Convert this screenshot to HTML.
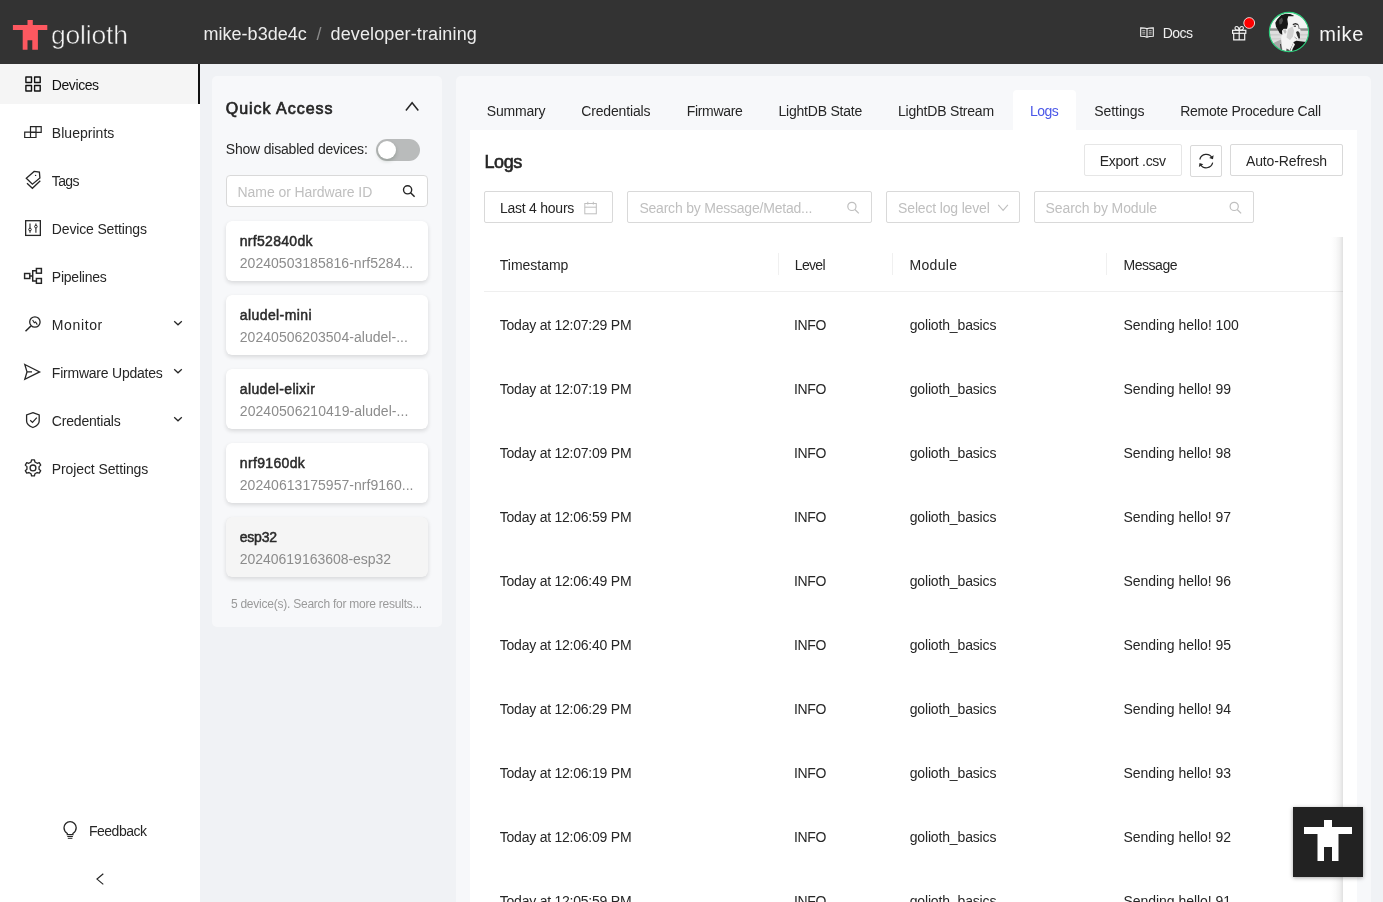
<!DOCTYPE html>
<html lang="en"><head><meta charset="utf-8"><title>Golioth Console - Logs</title>
<style>
*{box-sizing:border-box;margin:0;padding:0}
html,body{width:1383px;height:902px;overflow:hidden}
body{background:#f0f2f5;font-family:"Liberation Sans",Arial,sans-serif;color:#262626;position:relative;font-size:13.5px}
.t{position:absolute;white-space:nowrap;display:block;will-change:transform}
.abs{position:absolute}
header{position:absolute;left:0;top:0;width:1383px;height:64px;background:#333}
aside{position:absolute;left:0;top:64px;width:200px;height:838px;background:#fff}
.active{position:absolute;left:0;top:0;width:200px;height:40px;background:#f5f5f5;border-right:2px solid #111}
#quick{position:absolute;left:212px;top:76px;width:230px;height:551px;background:#f7f8fa;border-radius:5px}
#main{position:absolute;left:456px;top:76px;width:915px;height:840px;background:#f7f8fa;border-radius:5px}
#content{position:absolute;left:14px;top:54px;width:887.200px;height:800px;background:#fff}
.tabact{position:absolute;left:556.700px;top:14px;width:63.300px;height:40px;background:#fff;border-radius:4px 4px 0 0}
.btn{position:absolute;background:#fff;border:1px solid #d9d9d9;border-radius:2px}
.card{position:absolute;left:14px;width:202px;height:60px;background:#fff;border-radius:6px;box-shadow:0 2px 4px rgba(0,0,0,.13),0 0 1px rgba(0,0,0,.06)}
.card.sel{background:#f5f5f5}
svg{position:absolute;left:0;top:0;overflow:visible}
.ic{fill:none;stroke:#262626;stroke-width:1.3;stroke-linejoin:miter;stroke-linecap:butt}
</style></head><body>

<header>
<svg width="1383" height="64" viewBox="0 0 1383 64">
<path fill="#fd5860" d="M27.5 20h5.3v5H47.3v5H37.9V49.7h-5.6V40.2h-4.800v9.5h-4.800V30H12.9v-5h14.6z"/>
<g fill="none" stroke="#f2f2f2" stroke-width="1.1"><path d="M1146.7 28.6c-1.2-.5-3.200-.7-6-.7v8.300c2.800 0 5 .2 6.300 1.200c1.300-1 3.500-1.200 6.300-1.200v-8.300c-2.800 0-4.800.2-6 .7zM1147 28.800v8.600"/><path d="M1142.300 30.600h2.900M1142.300 32.300h2.900M1142.300 34h2.900M1148.800 30.600h2.900M1148.800 32.300h2.900M1148.800 34h2.900" stroke-width=".8" stroke="#cfcfcf"/></g>
<g fill="none" stroke="#f2f2f2" stroke-width="1.2"><rect x="1232.6" y="30.3" width="13.2" height="3"/><path d="M1233.7 33.3v6.600h11v-6.600M1239.2 30.3v9.600"/><path d="M1239.2 30.100c-.3-2-1.300-3.600-2.600-3.600c-1 0-1.600.7-1.600 1.600c0 1.100.9 1.900 2 1.900zM1239.2 30.100c.3-2 1.300-3.600 2.600-3.600c1 0 1.600.7 1.600 1.600c0 1.100-.9 1.900-2 1.900z" stroke-width="1.1"/></g>
<circle cx="1249.200" cy="23" r="5.400" fill="#ff0000" stroke="#fff" stroke-width=".8"/>
<defs><clipPath id="av"><circle cx="1289" cy="32" r="19.600"/></clipPath><filter id="avb" x="-10%" y="-10%" width="120%" height="120%"><feGaussianBlur stdDeviation=".450"/></filter></defs>
<g clip-path="url(#av)"><g filter="url(#avb)">
<rect x="1267" y="10" width="44" height="44" fill="#f4f4f4"/>
<rect x="1267" y="31" width="44" height="11" fill="#dedede"/>
<rect x="1267" y="28.300" width="44" height="2.500" fill="#8d8d8d"/>
<rect x="1267" y="34.500" width="44" height=".8" fill="#bdbdbd"/>
<rect x="1267" y="38.500" width="44" height=".8" fill="#c4c4c4"/>
<rect x="1267" y="42" width="44" height="12" fill="#ececec"/>
<path d="M1272 43.500l9.700-4.200 2.300 5.400 1 9.300h-13z" fill="#a9a9a9"/>
<path d="M1280.500 44l1.300 10" stroke="#3a3a3a" stroke-width="1" fill="none"/>
<path d="M1288.300 16.300h5l3 3 2 4.700.700 3.300 1.700 3-1 1.700.3 6-1.700 1.300-3.300 1.700-1.300 3.700-1 9.300h-9.700l-1.300-9.300-.6-5.400.6-4.600-.3-4 1.700-2h3.300l1-4.700z" fill="#f3f3f3"/>
<path d="M1288 29l4.500-2.500 1.500 4-1 6-3 3.500-3.500-2.500z" fill="#d2d2d2"/>
<path d="M1283 30.500l2.500-1.500 1 3-1.500 2z" fill="#bcbcbc"/>
<path d="M1293.700 42l2.600-1.300 9.700 1.300 2 1v11h-20l4.300-8.700z" fill="#161616"/>
<path d="M1289 54l2.500-7 2-4.500 1.500 2-2.500 4.500-1 5z" fill="#f0f0f0"/>
<path d="M1286.500 48.500l3 1.500-1 4h-2.500z" fill="#555"/>
<path d="M1285.700 13.700l4.600.2 3.700 1.800-.7.600h-5l-1 3 .7 4.700-1 4.700h-3.300l-1.700 2 .3 4-2.600-1.400-1.700-3.300-2-3.300-.7-4 2-3.400 3.700-4z" fill="#151515"/>
<path d="M1279 20l3-2.500 1 3-1.500 3.500-2 .5z" fill="#4a4a4a"/>
<path d="M1292.800 24.600l2.700-.9 2.500.9" stroke="#2a2a2a" stroke-width="1.300" fill="none"/>
<path d="M1293.800 26.200h2.200" stroke="#333" stroke-width="1.200" fill="none"/><path d="M1298.300 24.500l.9 4.500" stroke="#777" stroke-width="1" fill="none"/>
<path d="M1296 32l2-1 1.700 2 .3 5.300-1.300.4-1.700-3.400z" fill="#2e2e2e"/>
<path d="M1294.500 37l2.500 2" stroke="#888" stroke-width=".8" fill="none"/>
</g></g>
<circle cx="1289" cy="32" r="19.600" fill="none" stroke="#2fd07f" stroke-width="1.100"/>
</svg>
<span class="t" style="left:50px;top:19px;padding-left:0.90px;font-size:26.5px;line-height:32px;letter-spacing:-0.167px;color:#f4f4f4;-webkit-text-stroke:.55px #333;">golioth</span>
<span class="t" style="left:203px;top:23px;padding-left:0.50px;font-size:18px;line-height:22px;letter-spacing:0.025px;color:#ededed;">mike-b3de4c</span>
<span class="t" style="left:316px;top:23px;padding-left:0.50px;font-size:18px;line-height:22px;letter-spacing:0.000px;color:#8a8a8a;">/</span>
<span class="t" style="left:330px;top:23px;padding-left:0.50px;font-size:18px;line-height:22px;letter-spacing:0.129px;color:#ededed;">developer-training</span>
<span class="t" style="left:1162px;top:24px;padding-left:0.80px;font-size:14px;line-height:18px;letter-spacing:-0.567px;color:#f0f0f0;">Docs</span>
<span class="t" style="left:1319px;top:22px;padding-left:0.20px;font-size:20px;line-height:24px;letter-spacing:0.650px;color:#f5f5f5;">mike</span>
</header>
<aside>
<div class="active"></div>
<svg width="200" height="838" viewBox="0 64 200 838"><g class="ic">
<g stroke-width="1.4" stroke="#111" stroke-linejoin="round"><rect x="25.9" y="77" width="5.6" height="5.5"/><rect x="34.6" y="77" width="5.6" height="5.5"/><rect x="25.9" y="85.5" width="5.6" height="5.5"/><rect x="34.6" y="85.5" width="5.6" height="5.5"/></g>
<path stroke-width="1.200" d="M30.500 126.700h10.700v5.600H30.500zM36 126.700v10.800M24.700 132.100h11.300v5.400H24.700zM30.500 132.100v5.400"/>
<path d="M34.100 171.400l5.300.7.500 5.800-7.500 6.300-6.100-5.900z"/><path d="M27 183.300l5.400 5 7.900-7.500"/><circle cx="35.600" cy="175.400" r=".7" fill="#262626" stroke="none"/>
<rect x="25.650" y="220.700" width="14.700" height="14.700"/><path d="M30 223.500v4.700M30 230.800v2M35.900 223.500v1.800M35.900 227.900v4.900" stroke-width="1.1"/><circle cx="30" cy="229.500" r="1.300" stroke-width="1"/><circle cx="35.900" cy="226.600" r="1.300" stroke-width="1"/>
<g stroke-width="1.450"><rect x="24.600" y="273.500" width="5.200" height="5"/><rect x="36.400" y="268.500" width="5" height="4.700"/><rect x="36.400" y="278.500" width="5" height="4.800"/><path d="M29.800 276h2.900M36.400 270.800h-3.700v10.300h3.700"/></g>
<circle cx="34.900" cy="322" r="5.200"/><path d="M30.900 326l-5.400 5.300" stroke-width="1.500"/><path d="M32.600 320l1.700 2.700 1.300-.7 1.700 2.600" stroke-width="1.100" stroke-linejoin="miter"/>
<path d="M24.800 364.500l14.800 7.400-14.800 7.400 2.200-7.400zM27 371.900h5"/>
<path d="M32.900 412.700l6.300 2.300v6c0 3-2.500 5-6.300 6.500c-3.800-1.500-6.300-3.500-6.300-6.500v-6z"/><path d="M30.200 420.200l2.300 2.200 4.300-4.800" stroke-width="1.200"/>
<circle cx="33" cy="467.900" r="2.900"/>
<path stroke-linejoin="round" d="M31.08 462.00L31.55 459.83L34.45 459.83L34.92 462.00L37.15 463.29L39.26 462.61L40.72 465.12L39.06 466.61L39.06 469.19L40.72 470.68L39.26 473.19L37.15 472.51L34.92 473.80L34.45 475.97L31.55 475.97L31.08 473.80L28.85 472.51L26.74 473.19L25.28 470.68L26.94 469.19L26.94 466.61L25.28 465.12L26.74 462.61L28.85 463.29z"/>
<path d="M174.2 321.3l3.8 3.5 3.8-3.5" stroke-width="1.25"/>
<path d="M174.2 369.3l3.8 3.5 3.8-3.5" stroke-width="1.25"/>
<path d="M174.2 417.3l3.8 3.5 3.8-3.5" stroke-width="1.25"/>
<path d="M67.300 833.500c-2.200-1.500-3.300-3.400-3.300-5.700c0-3.400 2.700-6.100 6.100-6.100s6.100 2.700 6.100 6.100c0 2.300-1.100 4.200-3.300 5.700v1.200h-5.600z"/><path d="M67.300 836.500h5.600M67.800 838.300h4.600" stroke-width="1"/>
<path d="M103.300 873.800l-6.300 5.300 6.300 5.300" stroke-width="1.200"/>
</g></svg>
<span class="t" style="left:51px;top:12px;padding-left:0.80px;font-size:14px;line-height:18px;letter-spacing:-0.417px;color:#111;">Devices</span>
<span class="t" style="left:51px;top:60px;padding-left:0.80px;font-size:14px;line-height:18px;letter-spacing:0.033px;color:#262626;">Blueprints</span>
<span class="t" style="left:51px;top:108px;padding-left:0.80px;font-size:14px;line-height:18px;letter-spacing:-0.650px;color:#262626;">Tags</span>
<span class="t" style="left:51px;top:156px;padding-left:0.80px;font-size:14px;line-height:18px;letter-spacing:-0.154px;color:#262626;">Device Settings</span>
<span class="t" style="left:51px;top:204px;padding-left:0.80px;font-size:14px;line-height:18px;letter-spacing:-0.225px;color:#262626;">Pipelines</span>
<span class="t" style="left:51px;top:252px;padding-left:0.80px;font-size:14px;line-height:18px;letter-spacing:0.633px;color:#262626;">Monitor</span>
<span class="t" style="left:51px;top:300px;padding-left:0.80px;font-size:14px;line-height:18px;letter-spacing:-0.223px;color:#262626;">Firmware Updates</span>
<span class="t" style="left:51px;top:348px;padding-left:0.80px;font-size:14px;line-height:18px;letter-spacing:-0.190px;color:#262626;">Credentials</span>
<span class="t" style="left:51px;top:396px;padding-left:0.80px;font-size:14px;line-height:18px;letter-spacing:-0.103px;color:#262626;">Project Settings</span>
<span class="t" style="left:89px;top:758px;padding-left:0.00px;font-size:14px;line-height:18px;letter-spacing:-0.500px;color:#262626;">Feedback</span>
</aside>
<section id="quick">
<span class="t" style="left:13px;top:23px;padding-left:0.80px;font-size:16px;line-height:19px;letter-spacing:0.973px;color:#262626;-webkit-text-stroke:0.67px #262626;">Quick Access</span>
<span class="t" style="left:13px;top:64px;padding-left:0.80px;font-size:14px;line-height:18px;letter-spacing:-0.205px;color:#262626;">Show disabled devices:</span>
<div class="abs" style="left:164px;top:63px;width:44px;height:22px;border-radius:11px;background:#b9bbbb"><div class="abs" style="left:2px;top:2px;width:18px;height:18px;border-radius:9px;background:#fff;box-shadow:0 2px 4px rgba(0,35,11,.2)"></div></div>
<div class="btn" style="left:14px;top:99px;width:202px;height:32px;border-radius:4px"></div>
<span class="t" style="left:25px;top:107px;padding-left:0.60px;font-size:14px;line-height:18px;letter-spacing:-0.081px;color:#bfbfbf;">Name or Hardware ID</span>
<svg width="230" height="551" viewBox="212 76 230 551"><g class="ic"><circle cx="407.6" cy="189.8" r="4.1" stroke-width="1.4"/><path d="M410.6 192.8l4 4" stroke-width="1.5"/><path d="M405.9 110.5l6.200-7.800 6.200 7.800" stroke-width="1.5"/></g></svg>
<div class="card" style="top:145px">
<span class="t" style="left:13px;top:11px;padding-left:0.80px;font-size:14px;line-height:18px;letter-spacing:0.289px;color:#2a2a2a;-webkit-text-stroke:0.49px #2a2a2a;">nrf52840dk</span>
<span class="t" style="left:13px;top:33px;padding-left:0.80px;font-size:14px;line-height:18px;letter-spacing:0.025px;color:#8c8c8c;">20240503185816-nrf5284...</span>
</div>
<div class="card" style="top:219px">
<span class="t" style="left:13px;top:11px;padding-left:0.80px;font-size:14px;line-height:18px;letter-spacing:0.410px;color:#2a2a2a;-webkit-text-stroke:0.49px #2a2a2a;">aludel-mini</span>
<span class="t" style="left:13px;top:33px;padding-left:0.80px;font-size:14px;line-height:18px;letter-spacing:0.031px;color:#8c8c8c;">20240506203504-aludel-...</span>
</div>
<div class="card" style="top:293px">
<span class="t" style="left:13px;top:11px;padding-left:0.80px;font-size:14px;line-height:18px;letter-spacing:0.350px;color:#2a2a2a;-webkit-text-stroke:0.49px #2a2a2a;">aludel-elixir</span>
<span class="t" style="left:13px;top:33px;padding-left:0.80px;font-size:14px;line-height:18px;letter-spacing:0.048px;color:#8c8c8c;">20240506210419-aludel-...</span>
</div>
<div class="card" style="top:367px">
<span class="t" style="left:13px;top:11px;padding-left:0.80px;font-size:14px;line-height:18px;letter-spacing:0.338px;color:#2a2a2a;-webkit-text-stroke:0.49px #2a2a2a;">nrf9160dk</span>
<span class="t" style="left:13px;top:33px;padding-left:0.80px;font-size:14px;line-height:18px;letter-spacing:0.037px;color:#8c8c8c;">20240613175957-nrf9160...</span>
</div>
<div class="card sel" style="top:441px">
<span class="t" style="left:13px;top:11px;padding-left:0.80px;font-size:14px;line-height:18px;letter-spacing:-0.238px;color:#2a2a2a;-webkit-text-stroke:0.49px #2a2a2a;">esp32</span>
<span class="t" style="left:13px;top:33px;padding-left:0.80px;font-size:14px;line-height:18px;letter-spacing:-0.026px;color:#8c8c8c;">20240619163608-esp32</span>
</div>
<span class="t" style="left:18px;top:520px;padding-left:0.90px;font-size:12px;line-height:16px;letter-spacing:-0.234px;color:#9a9a9a;">5 device(s). Search for more results...</span>
</section>
<main id="main">
<div id="content"></div><div class="tabact"></div>
<span class="t" style="left:30px;top:26px;padding-left:0.80px;font-size:14px;line-height:18px;letter-spacing:-0.192px;color:#262626;">Summary</span>
<span class="t" style="left:125px;top:26px;padding-left:0.20px;font-size:14px;line-height:18px;letter-spacing:-0.145px;color:#262626;">Credentials</span>
<span class="t" style="left:230px;top:26px;padding-left:0.80px;font-size:14px;line-height:18px;letter-spacing:-0.336px;color:#262626;">Firmware</span>
<span class="t" style="left:322px;top:26px;padding-left:0.50px;font-size:14px;line-height:18px;letter-spacing:-0.217px;color:#262626;">LightDB State</span>
<span class="t" style="left:441px;top:26px;padding-left:1.00px;font-size:14px;line-height:18px;letter-spacing:-0.212px;color:#262626;">LightDB Stream</span>
<span class="t" style="left:574px;top:26px;padding-left:0.00px;font-size:14px;line-height:18px;letter-spacing:-0.517px;color:#4a57e8;">Logs</span>
<span class="t" style="left:638px;top:26px;padding-left:0.20px;font-size:14px;line-height:18px;letter-spacing:-0.036px;color:#262626;">Settings</span>
<span class="t" style="left:724px;top:26px;padding-left:0.20px;font-size:14px;line-height:18px;letter-spacing:-0.233px;color:#262626;">Remote Procedure Call</span>
<span class="t" style="left:28px;top:75px;padding-left:0.40px;font-size:18px;line-height:22px;letter-spacing:-0.383px;color:#262626;-webkit-text-stroke:0.63px #262626;">Logs</span>
<div class="btn" style="left:628px;top:68px;width:98px;height:32px;border-color:#e6e6e6"></div>
<span class="t" style="left:643px;top:76px;padding-left:0.80px;font-size:14px;line-height:18px;letter-spacing:-0.300px;color:#262626;">Export .csv</span>
<div class="btn" style="left:733.7px;top:69px;width:32px;height:32px"></div>
<div class="btn" style="left:773.5px;top:68px;width:113px;height:32px"></div>
<span class="t" style="left:790px;top:76px;padding-left:0.00px;font-size:14px;line-height:18px;letter-spacing:-0.132px;color:#262626;">Auto-Refresh</span>
<div class="btn" style="left:28px;top:115.3px;width:129px;height:32px"></div>
<span class="t" style="left:44px;top:123px;padding-left:0.00px;font-size:14px;line-height:18px;letter-spacing:-0.250px;color:#262626;">Last 4 hours</span>
<div class="btn" style="left:171px;top:115.3px;width:245px;height:32px"></div>
<span class="t" style="left:183px;top:123px;padding-left:0.40px;font-size:14px;line-height:18px;letter-spacing:-0.212px;color:#bfbfbf;">Search by Message/Metad...</span>
<div class="btn" style="left:429.7px;top:115.3px;width:134px;height:32px"></div>
<span class="t" style="left:442px;top:123px;padding-left:0.10px;font-size:14px;line-height:18px;letter-spacing:-0.163px;color:#bfbfbf;">Select log level</span>
<div class="btn" style="left:577.7px;top:115.3px;width:220px;height:32px"></div>
<span class="t" style="left:589px;top:123px;padding-left:0.60px;font-size:14px;line-height:18px;letter-spacing:-0.093px;color:#bfbfbf;">Search by Module</span>
<div class="abs" style="left:28px;top:215px;width:859px;height:1px;background:#efefef"></div>
<div class="abs" style="left:322.3px;top:177px;width:1px;height:22px;background:#f0f0f0"></div>
<div class="abs" style="left:435.8px;top:177px;width:1px;height:22px;background:#f0f0f0"></div>
<div class="abs" style="left:649.7px;top:177px;width:1px;height:22px;background:#f0f0f0"></div>
<div class="abs" style="left:875px;top:161px;width:12px;height:680px;background:linear-gradient(to right,rgba(0,0,0,0),rgba(0,0,0,.02) 40%,rgba(0,0,0,.055) 72%,rgba(0,0,0,.12))"></div>
<span class="t" style="left:43px;top:180px;padding-left:0.80px;font-size:14px;line-height:18px;letter-spacing:-0.025px;color:#262626;">Timestamp</span>
<span class="t" style="left:338px;top:180px;padding-left:0.80px;font-size:14px;line-height:18px;letter-spacing:-0.675px;color:#262626;">Level</span>
<span class="t" style="left:453px;top:180px;padding-left:0.50px;font-size:14px;line-height:18px;letter-spacing:0.330px;color:#262626;">Module</span>
<span class="t" style="left:667px;top:180px;padding-left:0.50px;font-size:14px;line-height:18px;letter-spacing:-0.458px;color:#262626;">Message</span>
<span class="t" style="left:43px;top:240px;padding-left:0.80px;font-size:14px;line-height:18px;letter-spacing:-0.234px;color:#262626;">Today at 12:07:29 PM</span>
<span class="t" style="left:337px;top:240px;padding-left:0.90px;font-size:14px;line-height:18px;letter-spacing:-0.283px;color:#262626;">INFO</span>
<span class="t" style="left:453px;top:240px;padding-left:0.70px;font-size:14px;line-height:18px;letter-spacing:-0.154px;color:#262626;">golioth_basics</span>
<span class="t" style="left:667px;top:240px;padding-left:0.50px;font-size:14px;line-height:18px;letter-spacing:-0.035px;color:#262626;">Sending hello! 100</span>
<span class="t" style="left:43px;top:304px;padding-left:0.80px;font-size:14px;line-height:18px;letter-spacing:-0.234px;color:#262626;">Today at 12:07:19 PM</span>
<span class="t" style="left:337px;top:304px;padding-left:0.90px;font-size:14px;line-height:18px;letter-spacing:-0.283px;color:#262626;">INFO</span>
<span class="t" style="left:453px;top:304px;padding-left:0.70px;font-size:14px;line-height:18px;letter-spacing:-0.154px;color:#262626;">golioth_basics</span>
<span class="t" style="left:667px;top:304px;padding-left:0.50px;font-size:14px;line-height:18px;letter-spacing:-0.038px;color:#262626;">Sending hello! 99</span>
<span class="t" style="left:43px;top:368px;padding-left:0.80px;font-size:14px;line-height:18px;letter-spacing:-0.234px;color:#262626;">Today at 12:07:09 PM</span>
<span class="t" style="left:337px;top:368px;padding-left:0.90px;font-size:14px;line-height:18px;letter-spacing:-0.283px;color:#262626;">INFO</span>
<span class="t" style="left:453px;top:368px;padding-left:0.70px;font-size:14px;line-height:18px;letter-spacing:-0.154px;color:#262626;">golioth_basics</span>
<span class="t" style="left:667px;top:368px;padding-left:0.50px;font-size:14px;line-height:18px;letter-spacing:-0.038px;color:#262626;">Sending hello! 98</span>
<span class="t" style="left:43px;top:432px;padding-left:0.80px;font-size:14px;line-height:18px;letter-spacing:-0.234px;color:#262626;">Today at 12:06:59 PM</span>
<span class="t" style="left:337px;top:432px;padding-left:0.90px;font-size:14px;line-height:18px;letter-spacing:-0.283px;color:#262626;">INFO</span>
<span class="t" style="left:453px;top:432px;padding-left:0.70px;font-size:14px;line-height:18px;letter-spacing:-0.154px;color:#262626;">golioth_basics</span>
<span class="t" style="left:667px;top:432px;padding-left:0.50px;font-size:14px;line-height:18px;letter-spacing:-0.038px;color:#262626;">Sending hello! 97</span>
<span class="t" style="left:43px;top:496px;padding-left:0.80px;font-size:14px;line-height:18px;letter-spacing:-0.234px;color:#262626;">Today at 12:06:49 PM</span>
<span class="t" style="left:337px;top:496px;padding-left:0.90px;font-size:14px;line-height:18px;letter-spacing:-0.283px;color:#262626;">INFO</span>
<span class="t" style="left:453px;top:496px;padding-left:0.70px;font-size:14px;line-height:18px;letter-spacing:-0.154px;color:#262626;">golioth_basics</span>
<span class="t" style="left:667px;top:496px;padding-left:0.50px;font-size:14px;line-height:18px;letter-spacing:-0.038px;color:#262626;">Sending hello! 96</span>
<span class="t" style="left:43px;top:560px;padding-left:0.80px;font-size:14px;line-height:18px;letter-spacing:-0.234px;color:#262626;">Today at 12:06:40 PM</span>
<span class="t" style="left:337px;top:560px;padding-left:0.90px;font-size:14px;line-height:18px;letter-spacing:-0.283px;color:#262626;">INFO</span>
<span class="t" style="left:453px;top:560px;padding-left:0.70px;font-size:14px;line-height:18px;letter-spacing:-0.154px;color:#262626;">golioth_basics</span>
<span class="t" style="left:667px;top:560px;padding-left:0.50px;font-size:14px;line-height:18px;letter-spacing:-0.038px;color:#262626;">Sending hello! 95</span>
<span class="t" style="left:43px;top:624px;padding-left:0.80px;font-size:14px;line-height:18px;letter-spacing:-0.234px;color:#262626;">Today at 12:06:29 PM</span>
<span class="t" style="left:337px;top:624px;padding-left:0.90px;font-size:14px;line-height:18px;letter-spacing:-0.283px;color:#262626;">INFO</span>
<span class="t" style="left:453px;top:624px;padding-left:0.70px;font-size:14px;line-height:18px;letter-spacing:-0.154px;color:#262626;">golioth_basics</span>
<span class="t" style="left:667px;top:624px;padding-left:0.50px;font-size:14px;line-height:18px;letter-spacing:-0.038px;color:#262626;">Sending hello! 94</span>
<span class="t" style="left:43px;top:688px;padding-left:0.80px;font-size:14px;line-height:18px;letter-spacing:-0.234px;color:#262626;">Today at 12:06:19 PM</span>
<span class="t" style="left:337px;top:688px;padding-left:0.90px;font-size:14px;line-height:18px;letter-spacing:-0.283px;color:#262626;">INFO</span>
<span class="t" style="left:453px;top:688px;padding-left:0.70px;font-size:14px;line-height:18px;letter-spacing:-0.154px;color:#262626;">golioth_basics</span>
<span class="t" style="left:667px;top:688px;padding-left:0.50px;font-size:14px;line-height:18px;letter-spacing:-0.038px;color:#262626;">Sending hello! 93</span>
<span class="t" style="left:43px;top:752px;padding-left:0.80px;font-size:14px;line-height:18px;letter-spacing:-0.234px;color:#262626;">Today at 12:06:09 PM</span>
<span class="t" style="left:337px;top:752px;padding-left:0.90px;font-size:14px;line-height:18px;letter-spacing:-0.283px;color:#262626;">INFO</span>
<span class="t" style="left:453px;top:752px;padding-left:0.70px;font-size:14px;line-height:18px;letter-spacing:-0.154px;color:#262626;">golioth_basics</span>
<span class="t" style="left:667px;top:752px;padding-left:0.50px;font-size:14px;line-height:18px;letter-spacing:-0.038px;color:#262626;">Sending hello! 92</span>
<span class="t" style="left:43px;top:816px;padding-left:0.80px;font-size:14px;line-height:18px;letter-spacing:-0.234px;color:#262626;">Today at 12:05:59 PM</span>
<span class="t" style="left:337px;top:816px;padding-left:0.90px;font-size:14px;line-height:18px;letter-spacing:-0.283px;color:#262626;">INFO</span>
<span class="t" style="left:453px;top:816px;padding-left:0.70px;font-size:14px;line-height:18px;letter-spacing:-0.154px;color:#262626;">golioth_basics</span>
<span class="t" style="left:667px;top:816px;padding-left:0.50px;font-size:14px;line-height:18px;letter-spacing:-0.038px;color:#262626;">Sending hello! 91</span>
<svg width="915" height="826" viewBox="456 76 915 826"><g class="ic">
<g stroke="#bfbfbf" stroke-width="1"><rect x="584.800" y="203.500" width="11.500" height="10.300"/><path d="M584.800 207.200h11.500M587.800 201.800v2.700M593.300 201.800v2.700"/></g>
<g stroke="#bfbfbf"><circle cx="851.9" cy="206.400" r="4.100" stroke-width="1.200"/><path d="M854.9 209.500l3.900 3.900" stroke-width="1.300"/></g>
<g stroke="#bfbfbf"><circle cx="1234.2" cy="206.400" r="4.100" stroke-width="1.200"/><path d="M1237.2 209.500l3.900 3.900" stroke-width="1.300"/></g>
<path d="M998.300 204.800l4.800 5.600 4.800-5.600" stroke="#bfbfbf" stroke-width="1.100"/>
<g stroke-width="1.200"><path d="M1199.800 159.500a6.600 6.600 0 0 1 12.300-1.500"/><path d="M1212.700 162.700a6.600 6.600 0 0 1-12.300 1.500"/></g><path d="M1213.600 155.200l-.6 4-3.800-1.300z" fill="#262626" stroke="none"/><path d="M1198.900 167l.6-4 3.800 1.300z" fill="#262626" stroke="none"/>
</g></svg>
</main>
<div class="abs" style="left:1293px;top:807px;width:70px;height:70px;background:#222;box-shadow:0 1px 4px rgba(0,0,0,.35)"><svg width="70" height="70" viewBox="1293 807 70 70"><path fill="#fff" d="M1324 820h8v7h20v7h-13.500v27h-6.500v-14h-8v14h-6.500v-27H1304v-7h20z"/></svg></div>
</body></html>
